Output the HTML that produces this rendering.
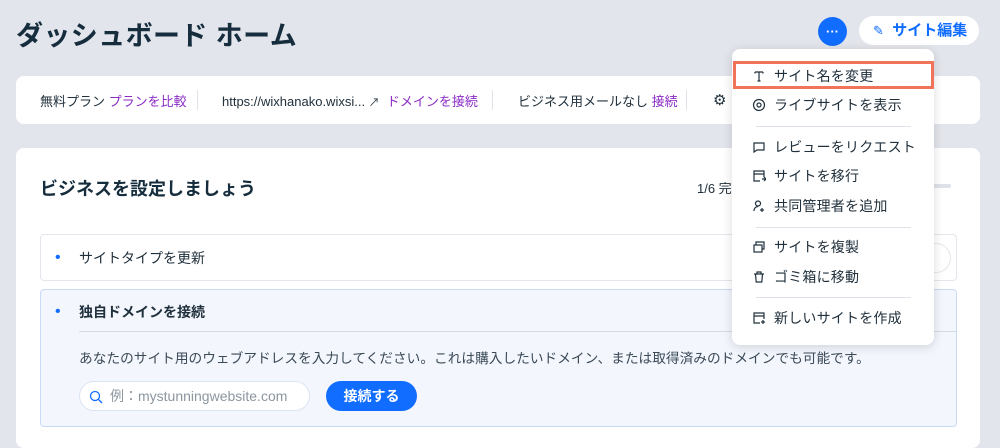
<!DOCTYPE html>
<html><head><meta charset="utf-8"><style>
*{box-sizing:border-box;margin:0;padding:0}
body{width:1000px;height:436px;overflow:hidden;background:#e2e5eb;font-family:"Liberation Sans","Noto Sans CJK JP",sans-serif;color:#20303c;position:relative}
.a{position:absolute}
.card{background:#fff;border-radius:8px}
.p{color:#8a2bc4}
.menu{left:732px;top:49px;width:202px;height:296px;background:#fff;border-radius:8px;box-shadow:0 2px 10px rgba(0,0,0,.15)}
.mi{position:absolute;left:20px;font-size:14px;color:#20303c;display:flex;align-items:center;letter-spacing:.2px}
.mi svg{width:14px;height:14px;margin-right:8px}
.div{position:absolute;left:24px;width:155px;height:1px;background:#dfe2e8}
</style></head><body>
<div class="a" style="left:16px;top:14px;font-size:27px;font-weight:bold;color:#162d3d;letter-spacing:.4px">ダッシュボード ホーム</div>
<div class="a" style="left:818px;top:17px;width:29px;height:29px;border-radius:50%;background:#116dff;color:#fff;text-align:center;font-size:13px;line-height:29px;font-weight:bold">···</div>
<div class="a" style="left:859px;top:16px;width:120px;height:29px;border-radius:15px;background:#fff;color:#116dff;font-size:15px;font-weight:bold;line-height:29px;padding-left:14px"><span style="font-size:13px;font-weight:normal">✎</span>&nbsp; サイト編集</div>

<div class="a card" style="left:16px;top:76px;width:964px;height:48px;font-size:13px">
<div class="a" style="left:24px;top:15px">無料プラン <span class="p">プランを比較</span></div>
<div class="a" style="left:181px;top:14px;width:1px;height:20px;background:#dfe2e8"></div>
<div class="a" style="left:206px;top:15px">https://wixhanako.wixsi... <span style="font-size:11px">↗</span>&nbsp; <span class="p">ドメインを接続</span></div>
<div class="a" style="left:476px;top:14px;width:1px;height:20px;background:#dfe2e8"></div>
<div class="a" style="left:502px;top:15px">ビジネス用メールなし <span class="p">接続</span></div>
<div class="a" style="left:670px;top:14px;width:1px;height:20px;background:#dfe2e8"></div>
<div class="a" style="left:697px;top:15px;font-size:15px">⚙</div>
</div>

<div class="a card" style="left:16px;top:148px;width:964px;height:300px">
<div class="a" style="left:24px;top:27px;font-size:18px;font-weight:bold;color:#162d3d">ビジネスを設定しましょう</div>
<div class="a" style="left:681px;top:30px;font-size:13px">1/6 完了</div>
<div class="a" style="left:880px;top:36px;width:55px;height:4px;background:#dfe2e8;border-radius:2px"></div>
<div class="a" style="left:24px;top:86px;width:917px;height:47px;border:1px solid #e3e6ec;border-radius:4px">
<div class="a" style="left:14px;top:14px;color:#116dff">•</div>
<div class="a" style="left:38px;top:13px;font-size:14px">サイトタイプを更新</div>
<div class="a" style="left:880px;top:8px;width:30px;height:30px;border:1px solid #e3e6ec;border-radius:50%"></div>
</div>
<div class="a" style="left:24px;top:141px;width:917px;height:138px;border:1px solid #c9daf6;border-radius:4px;background:#f3f6fd">
<div class="a" style="left:14px;top:13px;color:#116dff">•</div>
<div class="a" style="left:38px;top:12px;font-size:14px;font-weight:bold">独自ドメインを接続</div>
<div class="a" style="left:38px;top:41px;width:877px;height:1px;background:#d5dbe6"></div>
<div class="a" style="left:38px;top:57px;font-size:13.7px;color:#3b4a57">あなたのサイト用のウェブアドレスを入力してください。これは購入したいドメイン、または取得済みのドメインでも可能です。</div>
<div class="a" style="left:38px;top:91px;width:231px;height:30px;border:1px solid #dbe4f3;border-radius:15px;background:#fff;font-size:14px;color:#8c96a0;line-height:28px;padding-left:30px">例：mystunningwebsite.com
<svg class="a" style="left:9px;top:8px" width="14" height="14" viewBox="0 0 14 14"><circle cx="6" cy="6" r="4.5" fill="none" stroke="#116dff" stroke-width="1.3"/><path d="M9.5 9.5L13 13" stroke="#116dff" stroke-width="1.3"/></svg></div>
<div class="a" style="left:285px;top:91px;width:91px;height:30px;border-radius:15px;background:#116dff;color:#fff;font-size:14px;font-weight:bold;text-align:center;line-height:30px">接続する</div>
</div>
</div>

<div class="a menu">
<div class="a" style="left:1px;top:12px;width:201px;height:28px;border:3px solid #f0735a"></div>
<div class="mi" style="top:17px"><svg viewBox="0 0 14 14"><path d="M3 3h8M7 3v9M3 3v1.5M11 3v1.5M5.5 12h3" stroke="#20303c" stroke-width="1.2" fill="none"/></svg>サイト名を変更</div>
<div class="mi" style="top:46px"><svg viewBox="0 0 14 14"><circle cx="7" cy="7" r="5.5" fill="none" stroke="#20303c" stroke-width="1.2"/><circle cx="7" cy="7" r="2" fill="none" stroke="#20303c" stroke-width="1.2"/></svg>ライブサイトを表示</div>
<div class="div" style="top:77px"></div>
<div class="mi" style="top:88px"><svg viewBox="0 0 14 14"><path d="M2 3h10v7H5l-3 2z" fill="none" stroke="#20303c" stroke-width="1.2"/></svg>レビューをリクエスト</div>
<div class="mi" style="top:117px"><svg viewBox="0 0 14 14"><path d="M8 12H2V2h10v6M2 5h10M10 10h4M12 8l2 2-2 2" fill="none" stroke="#20303c" stroke-width="1.2"/></svg>サイトを移行</div>
<div class="mi" style="top:147px"><svg viewBox="0 0 14 14"><circle cx="6" cy="4.5" r="2.5" fill="none" stroke="#20303c" stroke-width="1.2"/><path d="M2 12c0-3 2-4.5 4-4.5M10 9v4M8 11h4" fill="none" stroke="#20303c" stroke-width="1.2"/></svg>共同管理者を追加</div>
<div class="div" style="top:178px"></div>
<div class="mi" style="top:188px"><svg viewBox="0 0 14 14"><rect x="2" y="5" width="8" height="7" fill="none" stroke="#20303c" stroke-width="1.2"/><path d="M4 5V2h8v7h-2" fill="none" stroke="#20303c" stroke-width="1.2"/></svg>サイトを複製</div>
<div class="mi" style="top:218px"><svg viewBox="0 0 14 14"><path d="M3.5 4h7l-.7 8H4.2zM2 4h10M5 4V2h4v2" fill="none" stroke="#20303c" stroke-width="1.2"/></svg>ゴミ箱に移動</div>
<div class="div" style="top:248px"></div>
<div class="mi" style="top:259px"><svg viewBox="0 0 14 14"><path d="M8 12H2V2h10v6M2 5h10M11 9v4M9 11h4" fill="none" stroke="#20303c" stroke-width="1.2"/></svg>新しいサイトを作成</div>
</div>
</body></html>
